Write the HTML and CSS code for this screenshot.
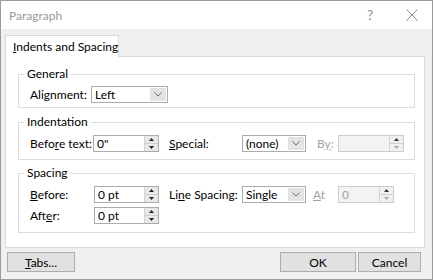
FILE: index.html
```html
<!DOCTYPE html>
<html lang="en">
<head>
    <meta charset="UTF-8">
    <title>Paragraph</title>
    <link rel="stylesheet" href="styles.css">
</head>
<body>
    <div class="dialog">
        <div class="titlebar">
            <span class="title">Paragraph</span>
            <span class="help">?</span>
            <span class="close">
                <svg width="12" height="12" viewBox="0 0 12 12"><path d="M0.5 0.5L11.5 11.5M11.5 0.5L0.5 11.5" stroke="#8a8a8a" stroke-width="1" fill="none"/></svg>
            </span>
        </div>

        <div class="content">
            <div class="tabs">
                <div class="tab active"><u>I</u>ndents and Spacing</div>
            </div>

            <div class="panel">
                <fieldset class="group group-general">
                    <legend>General</legend>
                    <div class="row">
                        <span class="lbl lbl-align">Ali<u>g</u>nment:</span>
                        <div class="select select-align">
                            <span class="value">Left</span>
                            <span class="arrow"><svg width="8" height="5" viewBox="0 0 8 5"><polyline points="0.5,0.5 4,4 7.5,0.5" fill="none" stroke="#6d6d6d"/></svg></span>
                        </div>
                    </div>
                </fieldset>

                <fieldset class="group group-indent">
                    <legend>Indentation</legend>
                    <div class="row">
                        <span class="lbl lbl-before-text">Befo<u>r</u>e text:</span>
                        <div class="spinner spinner-indent">
                            <span class="value">0"</span>
                            <span class="spin">
                                <span class="spin-btn"><svg width="5" height="3" viewBox="0 0 5 3"><polygon points="2.5,0 5,3 0,3" fill="#222"/></svg></span>
                                <span class="spin-btn"><svg width="5" height="3" viewBox="0 0 5 3"><polygon points="0,0 5,0 2.5,3" fill="#222"/></svg></span>
                            </span>
                        </div>
                        <span class="lbl lbl-mid"><u>S</u>pecial:</span>
                        <div class="select select-small">
                            <span class="value">(none)</span>
                            <span class="arrow"><svg width="8" height="5" viewBox="0 0 8 5"><polyline points="0.5,0.5 4,4 7.5,0.5" fill="none" stroke="#6d6d6d"/></svg></span>
                        </div>
                        <span class="lbl lbl-by disabled">B<u>y</u>:</span>
                        <div class="spinner spinner-by disabled">
                            <span class="value"></span>
                            <span class="spin">
                                <span class="spin-btn"><svg width="5" height="3" viewBox="0 0 5 3"><polygon points="2.5,0 5,3 0,3" fill="#333"/></svg></span>
                                <span class="spin-btn"><svg width="5" height="3" viewBox="0 0 5 3"><polygon points="0,0 5,0 2.5,3" fill="#aaa"/></svg></span>
                            </span>
                        </div>
                    </div>
                </fieldset>

                <fieldset class="group group-spacing">
                    <legend>Spacing</legend>
                    <div class="row">
                        <span class="lbl lbl-space"><u>B</u>efore:</span>
                        <div class="spinner spinner-space">
                            <span class="value">0 pt</span>
                            <span class="spin">
                                <span class="spin-btn"><svg width="5" height="3" viewBox="0 0 5 3"><polygon points="2.5,0 5,3 0,3" fill="#222"/></svg></span>
                                <span class="spin-btn"><svg width="5" height="3" viewBox="0 0 5 3"><polygon points="0,0 5,0 2.5,3" fill="#222"/></svg></span>
                            </span>
                        </div>
                        <span class="lbl lbl-mid">Li<u>n</u>e Spacing:</span>
                        <div class="select select-small">
                            <span class="value">Single</span>
                            <span class="arrow"><svg width="8" height="5" viewBox="0 0 8 5"><polyline points="0.5,0.5 4,4 7.5,0.5" fill="none" stroke="#6d6d6d"/></svg></span>
                        </div>
                        <span class="lbl lbl-at disabled"><u>A</u>t</span>
                        <div class="spinner spinner-at disabled">
                            <span class="value">0</span>
                            <span class="spin">
                                <span class="spin-btn"><svg width="5" height="3" viewBox="0 0 5 3"><polygon points="2.5,0 5,3 0,3" fill="#333"/></svg></span>
                                <span class="spin-btn"><svg width="5" height="3" viewBox="0 0 5 3"><polygon points="0,0 5,0 2.5,3" fill="#aaa"/></svg></span>
                            </span>
                        </div>
                    </div>
                    <div class="row row-after">
                        <span class="lbl lbl-space">Aft<u>e</u>r:</span>
                        <div class="spinner spinner-space">
                            <span class="value">0 pt</span>
                            <span class="spin">
                                <span class="spin-btn"><svg width="5" height="3" viewBox="0 0 5 3"><polygon points="2.5,0 5,3 0,3" fill="#222"/></svg></span>
                                <span class="spin-btn"><svg width="5" height="3" viewBox="0 0 5 3"><polygon points="0,0 5,0 2.5,3" fill="#222"/></svg></span>
                            </span>
                        </div>
                    </div>
                </fieldset>
            </div>

            <div class="footer">
                <button class="btn btn-tabs"><u>T</u>abs...</button>
                <button class="btn btn-ok">OK</button>
                <button class="btn btn-cancel">Cancel</button>
            </div>
        </div>
    </div>
</body>
</html>
```

FILE: styles.css
```css
body {
    margin: 0;
    background-color: #ffffff;
}

.dialog {
    width: 433px;
    height: 280px;
    box-sizing: border-box;
    border: 1px solid #9b9b9b;
    background-color: #f0f0f0;
    font-family: Lato, "Noto Sans", sans-serif;
    font-size: 12px;
    color: #000;
    display: flex;
    flex-direction: column;
}

.titlebar {
    height: 28px;
    flex: none;
    background-color: #fff;
    display: flex;
    align-items: center;
    padding-left: 8px;
    color: #9a9a9a;
}

.title {
    font-size: 12px;
}

.help {
    margin-left: auto;
    margin-right: 33px;
    font-size: 13px;
    color: #8a8a8a;
}

.close {
    display: flex;
    margin-right: 14px;
}

.content {
    flex: 1;
    padding: 6px 7px 0 4px;
}

.tabs {
    display: flex;
}

.tab {
    position: relative;
    z-index: 1;
    box-sizing: border-box;
    width: 114px;
    height: 22px;
    line-height: 21px;
    padding-left: 7px;
    background-color: #fff;
    border: 1px solid #d9d9d9;
    border-bottom: none;
    margin-bottom: -1px;
    white-space: nowrap;
}

.panel {
    background-color: #fff;
    border: 1px solid #d9d9d9;
    padding: 10px 9px 14px 12px;
}

.group {
    margin: 0;
    min-width: 0;
    border: 1px solid #dcdcdc;
    padding: 5px 0 4px 5px;
}

.group legend {
    padding: 0 3px;
    line-height: 14px;
}

.group-indent {
    margin-top: 7px;
    padding-top: 6px;
    padding-bottom: 7px;
}

.group-spacing {
    margin-top: 6px;
    padding-top: 6px;
    padding-bottom: 8px;
}

.row {
    display: flex;
    align-items: center;
    height: 17px;
    margin-left: 6px;
}

.row-after {
    margin-top: 4px;
}

.lbl {
    flex: none;
    white-space: nowrap;
}

.lbl-align { width: 61px; }
.lbl-before-text { width: 63px; }
.lbl-space { width: 64px; }
.lbl-mid { width: 73px; margin-left: 10px; }
.lbl-by { width: 21px; margin-left: 11px; }
.lbl-at { width: 25px; margin-left: 7px; }

.disabled {
    color: #a3a3a3;
}

.select,
.spinner {
    box-sizing: border-box;
    height: 17px;
    display: flex;
    border: 1px solid #acacac;
    background-color: #fff;
}

.select .value,
.spinner .value {
    flex: 1;
    padding-left: 3px;
    line-height: 15px;
    white-space: nowrap;
}

.select-align { width: 77px; }
.select-small { width: 64px; }

.arrow {
    width: 16px;
    margin: 1px;
    background-color: #e3e3e3;
    display: flex;
    align-items: center;
    justify-content: center;
}

.spinner-indent { width: 66px; }
.spinner-space { width: 65px; }
.spinner-by { width: 66px; }
.spinner-at { width: 56px; }

.spinner.disabled {
    background-color: #f3f3f3;
    border-color: #cccccc;
}

.spin {
    width: 13px;
    display: flex;
    flex-direction: column;
    border-left: 1px solid #d4d4d4;
}

.spin-btn {
    flex: 1;
    display: flex;
    align-items: center;
    justify-content: center;
    background-color: #e8e8e8;
}

.spin-btn + .spin-btn {
    border-top: 1px solid #cfcfcf;
}

.spinner.disabled .spin-btn {
    background-color: #f0f0f0;
}

.footer {
    display: flex;
    padding-top: 4px;
}

.btn {
    box-sizing: border-box;
    height: 20px;
    padding: 0;
    font-family: inherit;
    font-size: 12px;
    color: #000;
    background-color: #e1e1e1;
    border: 1px solid #adadad;
}

.btn-tabs {
    width: 68px;
    margin-left: 2px;
}

.btn-ok {
    width: 76px;
    margin-left: auto;
}

.btn-cancel {
    width: 63px;
    margin-left: 2px;
    margin-right: 4px;
}
```
